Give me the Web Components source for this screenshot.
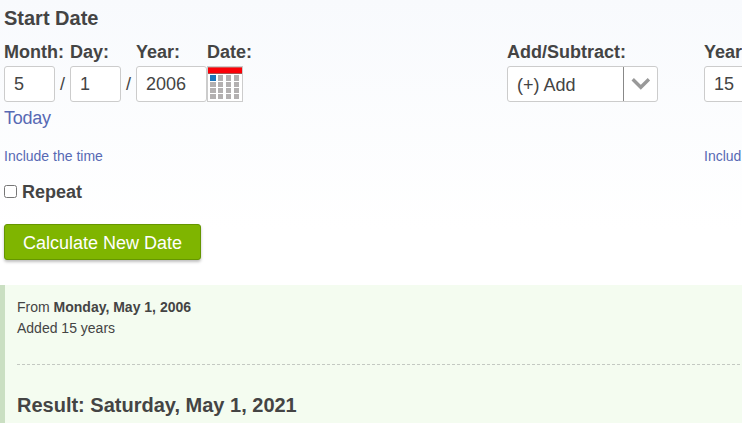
<!DOCTYPE html>
<html lang="en">
<head>
<meta charset="utf-8">
<title>Date Calculator</title>
<style>
  html, body {
    margin: 0;
    height: 100%;
    overflow: hidden;
  }
  body {
    font: 18px "Liberation Sans", Arial, sans-serif;
    color: #444;
    background: #fff;
  }
</style>
</head>
<body>
<date-calculator></date-calculator>

<script>
(function () {

  function define(name, html) {
    const template = document.createElement('template');
    template.innerHTML = html;

    customElements.define(name, class extends HTMLElement {
      constructor() {
        super();
        this.attachShadow({ mode: 'open' });
        this.shadowRoot.appendChild(template.content.cloneNode(true));
      }
    });
  }

  // label on top, control below
  define('form-field', `
  <style>
    :host { display: flex; flex-direction: column; align-items: flex-start; flex: none; }
    .label { font-weight: bold; line-height: 28px; white-space: nowrap; }
    .control { height: 36px; display: flex; }
  </style>
  <div class="label"><slot name="label"></slot></div>
  <div class="control"><slot></slot></div>
  `);

  define('text-box', `
  <style>
    :host {
      display: block;
      box-sizing: border-box;
      width: var(--box-width, 51px);
      height: 36px;
      padding-left: 9px;
      border: 1px solid #ccc;
      border-radius: 3px;
      background: #fff;
      line-height: 34px;
    }
  </style>
  <slot></slot>
  `);

  define('select-box', `
  <style>
    :host {
      display: flex;
      box-sizing: border-box;
      width: 151px;
      height: 36px;
      border: 1px solid #ccc;
      border-radius: 3px;
      background: #fff;
      line-height: 36px;
    }
    .value { flex: 1; padding-left: 9px; }
    .arrow { width: 33px; border-left: 1px solid #888; }
    svg { display: block; }
  </style>
  <div class="value"><slot></slot></div>
  <div class="arrow">
    <svg width="33" height="34" viewBox="0 0 33 34">
      <path d="M8.7 12.3 L16.8 20.3 L24.9 12.3" fill="none" stroke="#999" stroke-width="3.4"/>
    </svg>
  </div>
  `);

  define('calendar-button', `
  <style>
    :host { display: block; width: 36px; height: 36px; }
    svg { display: block; }
    rect { shape-rendering: crispEdges; }
  </style>
  <svg width="36" height="36" viewBox="0 0 36 36">
    <rect width="36" height="36" fill="#ccc"/>
    <rect x="1" y="1" width="34" height="34" fill="#fff"/>
    <rect x="1" y="1" width="34" height="1" fill="#d85050"/>
    <rect x="1" y="2" width="34" height="5" fill="#fb0007"/>
    <rect x="1" y="7" width="34" height="1" fill="#a8524e"/>
    <g class="days" fill="#b3b0b0"></g>
    <rect x="3" y="9" width="6" height="6" fill="#1b75bb"/>
  </svg>
  `);

  define('link-text', `
  <style>
    :host { display: block; color: #5769b4; white-space: nowrap; }
  </style>
  <slot></slot>
  `);

  define('check-option', `
  <style>
    :host { display: flex; align-items: center; gap: 5px; font-weight: bold; line-height: 24px; }
    input { width: 13px; height: 13px; margin: 0 0 2px; }
  </style>
  <input type="checkbox"><span><slot></slot></span>
  `);

  define('submit-button', `
  <style>
    :host {
      display: block;
      box-sizing: border-box;
      width: 197px;
      height: 36px;
      border: 1px solid #659600;
      border-radius: 3px;
      background: #7fb500;
      box-shadow: 0 2px 3px rgba(0, 0, 0, .25);
      color: #fff;
      line-height: 36px;
      text-align: center;
    }
  </style>
  <slot></slot>
  `);

  define('result-panel', `
  <style>
    :host {
      display: block;
      flex: 1;
      padding: 12px 2px 0 12px;
      border-left: 5px solid #cadfc2;
      background: #f4fcf0;
    }
    .details { font-size: 14px; line-height: 21px; height: 67px; border-bottom: 1px dashed #c4c9c2; }
    .result { font-size: 20px; font-weight: bold; line-height: 24px; margin-top: 28px; }
  </style>
  <div class="details"><slot></slot></div>
  <div class="result"><slot name="result"></slot></div>
  `);

  define('date-calculator', `
  <style>
    :host { display: flex; flex-direction: column; height: 423px; }
    .form {
      box-sizing: border-box;
      height: 285px;
      padding: 6px 0 0 4px;
      background: linear-gradient(#f8fafd, #fff 230px);
    }
    .title { font-size: 20px; font-weight: bold; line-height: 24px; margin-bottom: 8px; }
    .columns { display: grid; grid-template-columns: 503px 197px 60px; }
    .date { display: flex; }
    .slash { width: 15px; padding-top: 28px; line-height: 36px; text-align: center; }
    .year { --box-width: 71px; }
    .today { line-height: 24px; margin-top: 4px; letter-spacing: -.25px; }
    .time { font-size: 14px; line-height: 20px; margin-top: 16px; }
    .years .time { margin-top: 44px; }
    check-option { margin-top: 14px; }
    submit-button { margin-top: 20px; }
  </style>
  <div class="form">
    <div class="title">Start Date</div>
    <div class="columns">
      <div>
        <div class="date">
          <form-field style="width: 51px"><span slot="label">Month:</span><text-box>5</text-box></form-field>
          <div class="slash">/</div>
          <form-field style="width: 51px"><span slot="label">Day:</span><text-box>1</text-box></form-field>
          <div class="slash">/</div>
          <form-field style="width: 71px"><span slot="label">Year:</span><text-box class="year">2006</text-box></form-field>
          <form-field><span slot="label">Date:</span><calendar-button></calendar-button></form-field>
        </div>
        <link-text class="today">Today</link-text>
        <link-text class="time">Include the time</link-text>
      </div>
      <form-field><span slot="label">Add/Subtract:</span><select-box>(+) Add</select-box></form-field>
      <div class="years">
        <form-field><span slot="label">Year</span><text-box>15</text-box></form-field>
        <link-text class="time">Includ</link-text>
      </div>
    </div>
    <check-option>Repeat</check-option>
    <submit-button>Calculate New Date</submit-button>
  </div>
  <result-panel>
    <div>From <b>Monday, May 1, 2006</b></div>
    <div>Added 15 years</div>
    <span slot="result">Result: Saturday, May 1, 2021</span>
  </result-panel>
  `);

  // fill in the day squares of the calendar icon
  const calculator = document.querySelector('date-calculator');
  const calendar = calculator.shadowRoot.querySelector('calendar-button');
  const days = calendar.shadowRoot.querySelector('.days');
  let squares = '';
  [9, 16, 22, 28].forEach((y, row) => {
    [3, 11, 19, 27].forEach((x) => {
      squares += `<rect x="${x}" y="${y}" width="${x === 3 ? 6 : 5}" height="${row ? 5 : 6}"/>`;
    });
  });
  days.innerHTML = squares;

})();
</script>
</body>
</html>
